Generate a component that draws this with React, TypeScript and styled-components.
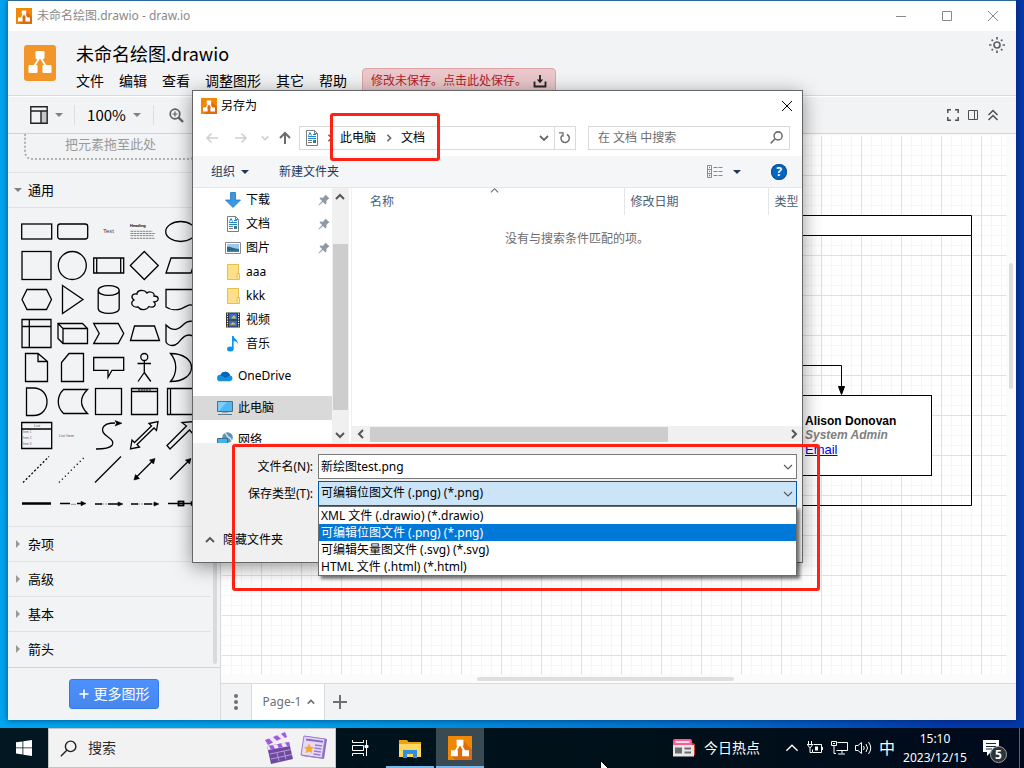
import React from 'react';
import styled, { createGlobalStyle, css } from 'styled-components';

const UI_FONT = '"Noto Sans", "Noto Sans CJK SC", sans-serif';
const NARROW_FONT = '"Noto Sans CJK SC", sans-serif';
const INK = '#000';

const GlobalStyle = createGlobalStyle`
  *, *::before, *::after { box-sizing: border-box; }
  body { margin: 0; font-family: ${UI_FONT}; font-size: 12px; line-height: 16px; color: ${INK}; }
  button, input, select { font: inherit; color: inherit; margin: 0; padding: 0; border: 0; background: none; border-radius: 0; }
  h1, h2, p, ul { margin: 0; padding: 0; font-size: inherit; font-weight: inherit; list-style: none; }
  svg { display: block; flex: none; }
`;

/* ---------- desktop ---------- */

const Desktop = styled.div`
  position: relative;
  display: flex;
  flex-direction: column;
  min-height: 100vh;
  overflow: hidden;
  background: linear-gradient(90deg, #00a4ef 0%, #009fe8 30%, #0068c8 72%, #0439a8 92%, #0439a8 100%);
`;

const AppWindow = styled.div`
  flex: 1;
  display: flex;
  flex-direction: column;
  margin: 0 8px 8px;
  border-top: 1px solid #2b6a9c;
  background: #f1f3f5;
  box-shadow: 0 0 6px rgba(0, 20, 60, 0.6);
`;

const Row = styled.div<{ $gap?: number }>`
  display: flex;
  align-items: center;
  gap: ${(p) => p.$gap ?? 0}px;
`;

const Spacer = styled.div`
  flex: 1;
`;

const IconButton = styled.button<{ $w?: number; $h?: number }>`
  display: flex;
  align-items: center;
  justify-content: center;
  flex: none;
  width: ${(p) => p.$w ?? 20}px;
  height: ${(p) => p.$h ?? 20}px;
`;

/* ---------- main window ---------- */

const TitleBar = styled.div`
  display: flex;
  align-items: center;
  height: 30px;
  padding-left: 8px;
  gap: 5px;
  background: #fff;
  color: #8a8a8a;
`;

const Header = styled.header`
  display: flex;
  height: 65px;
  padding: 0 8px 0 16px;
  border-bottom: 1px solid #d8dadd;
`;

const HeaderLogo = styled.div`
  margin-top: 14px;
`;

const HeaderText = styled.div`
  flex: 1;
  padding: 10px 0 0 20px;
`;

const DocTitle = styled.h1`
  height: 24px;
  font-family: ${NARROW_FONT};
  font-size: 18px;
  line-height: 24px;
`;

const MenuRow = styled.nav`
  display: flex;
  gap: 15px;
  align-items: center;
  height: 28px;
  margin-top: 2px;
`;

const MenuButton = styled.button`
  font-size: 14px;
  line-height: 20px;
`;

const SaveNotice = styled.button`
  display: flex;
  align-items: center;
  gap: 6px;
  height: 26px;
  padding: 0 8px;
  border: 1px solid #dfa3a8;
  border-radius: 4px;
  background: #e9c7ca;
  color: #b5202a;
`;

const Toolbar = styled.div`
  display: flex;
  align-items: center;
  height: 38px;
  padding: 0 13px 0 10px;
  border-top: 1px solid #fff;
  border-bottom: 1px solid #d0d2d4;
`;

const ToolDivider = styled.span`
  width: 1px;
  height: 20px;
  background: #dcdee0;
`;

const ToolButton = styled.button<{ $w: number }>`
  display: flex;
  align-items: center;
  justify-content: center;
  gap: 7px;
  width: ${(p) => p.$w}px;
  height: 28px;
  font-family: ${NARROW_FONT};
  font-size: 15px;
  line-height: 20px;
`;

const Body = styled.div`
  flex: 1;
  display: flex;
`;

/* ---------- shape sidebar ---------- */

const Sidebar = styled.aside`
  display: flex;
  flex-direction: column;
  width: 213px;
  flex: none;
  border-right: 1px solid #d8dadd;
`;

const SidebarScroll = styled.div`
  flex: 1;
  display: flex;
  border-bottom: 1px solid #d0d2d4;
`;

const SidebarPane = styled.div`
  flex: 1;
`;

const SidebarTrack = styled.div`
  display: flex;
  width: 9px;
  padding: 3px 3px 3px 2px;
`;

const SidebarThumb = styled.div`
  flex: 1;
  border-radius: 2px;
  background: #d8dadc;
`;

const DropZone = styled.p`
  height: 26px;
  margin: 0 14px 12px 16px;
  border: 2px dotted #b0b0b0;
  border-top: 0;
  border-radius: 0 0 8px 8px;
  color: #9a9a9a;
  font-size: 13px;
  line-height: 20px;
  text-align: center;
`;

const SectionButton = styled.button`
  display: flex;
  align-items: center;
  gap: 6px;
  width: 100%;
  height: 35px;
  padding-left: 6px;
  border-top: 1px solid #dfe1e3;
  font-size: 13px;
  line-height: 20px;
`;

const ShapeGrid = styled.div`
  display: grid;
  grid-template-columns: repeat(5, 36px);
  grid-auto-rows: 34px;
  padding: 6px 0 6px 10px;
  border-top: 1px solid #dfe1e3;
`;

const SidebarFooter = styled.div`
  display: flex;
  justify-content: center;
  padding: 11px 0;
`;

const MoreShapes = styled.button`
  display: flex;
  align-items: center;
  justify-content: center;
  gap: 5px;
  width: 90px;
  height: 30px;
  border: 1px solid #3079ed;
  border-radius: 3px;
  background: linear-gradient(#4d90fe, #4787ed);
  color: #fff;
  font-size: 14px;
  line-height: 20px;
`;

/* ---------- canvas ---------- */

const Editor = styled.main`
  flex: 1;
  display: flex;
  flex-direction: column;
  min-width: 0;
`;

const CanvasArea = styled.div`
  flex: 1;
  display: grid;
  grid-template-columns: 1fr 10px;
  grid-template-rows: 1fr 9px;
  padding: 2px 0 0 1px;
  background: #fbfbfb;
`;

const Stage = styled.div`
  position: relative;
  overflow: hidden;
  background-color: #fff;
  background-image:
    linear-gradient(90deg, #e0e0e0 1px, transparent 1px),
    linear-gradient(#e0e0e0 1px, transparent 1px),
    linear-gradient(90deg, #f6f6f6 1px, transparent 1px),
    linear-gradient(#f6f6f6 1px, transparent 1px);
  background-size: 40px 40px, 40px 40px, 10px 10px, 10px 10px;
  background-position: 39px 0, 0 39px, 9px 0, 0 9px;
`;

const Diagram = styled.svg`
  position: absolute;
  left: 0;
  top: 0;
`;

const PersonCard = styled.div`
  position: absolute;
  left: 539px;
  top: 259px;
  width: 171px;
  height: 81px;
  padding: 18px 0 0 43px;
  border: 1px solid #000;
  background: #fff;
  font: bold 12px/14px "Liberation Sans", sans-serif;
`;

const Role = styled.p`
  color: #808080;
  font-style: italic;
`;

const MailLink = styled.a`
  color: #0000ee;
  font-size: 13px;
  font-weight: 400;
  line-height: 16px;
  text-decoration: underline;
`;

const VRail = styled.div`
  padding: 127px 3px 0;
`;

const VThumb = styled.div`
  height: 126px;
  border-radius: 2px;
  background: #dedede;
`;

const HRail = styled.div`
  padding: 3px 0 0 255px;
`;

const HThumb = styled.div`
  width: 257px;
  height: 4px;
  border-radius: 2px;
  background: #dedede;
`;

const TabStrip = styled.div`
  display: flex;
  height: 37px;
  border-top: 1px solid #d8dadd;
`;

const PageTab = styled.button`
  display: flex;
  align-items: center;
  justify-content: center;
  gap: 6px;
  width: 74px;
  padding-left: 2px;
  border: solid #d8dadd;
  border-width: 0 1px;
  background: #fff;
  color: #707070;
`;

/* ---------- save dialog ---------- */

const Dialog = styled.section`
  position: absolute;
  left: 192px;
  top: 90px;
  width: 611px;
  border: 1px solid #666;
  background: #fff;
  box-shadow: 0 4px 18px rgba(0, 0, 0, 0.42);
`;

const DialogTitle = styled.div`
  display: flex;
  align-items: center;
  height: 30px;
  padding: 0 5px 1px 8px;
  gap: 4px;
`;

const NavRow = styled.div`
  display: flex;
  align-items: center;
  height: 35px;
  padding: 0 12px 2px 8px;
`;

const AddressBar = styled.div`
  flex: none;
  display: flex;
  align-items: center;
  width: 277px;
  height: 24px;
  margin-right: 12px;
  padding-left: 4px;
  border: 1px solid #d9d9d9;
`;

const Crumb = styled.button`
  flex: none;
`;

const RefreshCell = styled.span`
  display: flex;
  height: 100%;
  border-left: 1px solid #d9d9d9;
`;

const SearchBox = styled.label`
  flex: 1;
  display: flex;
  align-items: center;
  min-width: 0;
  height: 24px;
  padding: 0 6px 0 9px;
  border: 1px solid #d9d9d9;

  input {
    flex: 1;
    min-width: 0;
    outline: 0;
  }

  input::placeholder {
    color: #6d6d6d;
    opacity: 1;
  }
`;

const CommandBar = styled.div`
  display: flex;
  align-items: center;
  height: 32px;
  padding: 0 15px 0 18px;
  border-bottom: 1px solid #e4e6e8;
  background: #f4f6f8;
  color: #1e395b;
`;

const CommandButton = styled.button<{ $gap?: number }>`
  display: flex;
  align-items: center;
  gap: ${(p) => p.$gap ?? 6}px;
  margin-right: 30px;
`;

const Browser = styled.div`
  display: flex;
  height: 255px;
`;

const Tree = styled.ul`
  width: 139px;
  overflow: hidden;
`;

const TreeItem = styled.li<{ $level: number; $selected?: boolean }>`
  display: flex;
  align-items: center;
  gap: 5px;
  height: 24px;
  margin-bottom: ${(p) => (p.$level === 1 ? 8 : 0)}px;
  padding-left: ${(p) => (p.$level === 1 ? 24 : 32)}px;
  background: ${(p) => (p.$selected ? '#d9d9d9' : 'transparent')};
`;

const TreeGap = styled.li`
  height: 8px;
`;

const PinSlot = styled.span`
  margin-left: auto;
  padding-right: 2px;
`;

const TreeScroll = styled.div`
  display: flex;
  flex-direction: column;
  width: 17px;
  background: #f0f0f0;
`;

const TreeThumb = styled.div`
  flex: 1;
  margin: 38px 1px 16px;
  background: #cdcdcd;
`;

const FileList = styled.div`
  flex: 1;
  display: flex;
  flex-direction: column;
  min-width: 0;
  margin-left: 2px;
  border-left: 1px solid #f0f0f0;
`;

const FileTable = styled.table`
  width: 100%;
  table-layout: fixed;
  border-collapse: collapse;
  color: #4c607a;

  th {
    position: relative;
    height: 27px;
    padding: 0 0 0 6px;
    border-right: 1px solid #e5e5e5;
    font-weight: 400;
    text-align: left;
    white-space: nowrap;
  }

  th:first-child {
    width: 272px;
    padding-left: 18px;
  }

  th:nth-child(2) {
    width: 144px;
  }

  th:last-child {
    border-right: 0;
  }
`;

const SortMark = styled.span`
  position: absolute;
  left: 138px;
  top: -2px;
`;

const EmptyNote = styled.p`
  flex: 1;
  padding-top: 16px;
  color: #6d6d6d;
  text-align: center;
`;

const ListScroll = styled.div`
  display: flex;
  align-items: center;
  height: 16px;
  margin-bottom: 1px;
  background: #f0f0f0;
`;

const ListThumb = styled.div`
  width: 298px;
  height: 15px;
  background: #cdcdcd;
`;

const DialogFooter = styled.div`
  padding-top: 11px;
  background: #f0f0f0;
`;

const FieldGrid = styled.div`
  display: grid;
  grid-template-columns: 120px 479px;
  gap: 2px 5px;
`;

const FieldLabel = styled.label`
  align-self: center;
  text-align: right;
`;

const FieldWrap = styled.div`
  position: relative;
`;

const fieldBox = css`
  display: block;
  width: 100%;
  height: 25px;
  padding: 0 24px 1px 2px;
  outline: 0;
`;

const NameInput = styled.input`
  && {
    ${fieldBox}
    border: 1px solid #7a7a7a;
    background: #fff;
  }
`;

const TypeSelect = styled.select`
  && {
    ${fieldBox}
    appearance: none;
    border: 1px solid #0058a8;
    background: #cce4f7;
  }
`;

const FieldArrow = styled.span`
  position: absolute;
  right: 4px;
  top: 8px;
  pointer-events: none;
`;

const OptionList = styled.ul`
  position: absolute;
  left: 0;
  top: 25px;
  z-index: 2;
  width: 100%;
  border: 1px solid #6b6b6b;
  background: #fff;
  box-shadow: 3px 3px 3px rgba(0, 0, 0, 0.5);
`;

const OptionItem = styled.li<{ $active?: boolean }>`
  height: 17px;
  padding-left: 2px;
  line-height: 17px;
  background: ${(p) => (p.$active ? '#0078d7' : '#fff')};
  color: ${(p) => (p.$active ? '#fff' : '#000')};
`;

const HideFolders = styled.button`
  display: flex;
  align-items: center;
  gap: 8px;
  height: 56px;
  padding: 12px 0 0 12px;
`;

const Highlight = styled.div<{ $x: number; $y: number; $w: number; $h: number }>`
  position: absolute;
  left: ${(p) => p.$x}px;
  top: ${(p) => p.$y}px;
  width: ${(p) => p.$w}px;
  height: ${(p) => p.$h}px;
  border: 3px solid #ff2113;
  border-radius: 3px;
  pointer-events: none;
`;

/* ---------- taskbar ---------- */

const Taskbar = styled.footer`
  display: flex;
  align-items: center;
  height: 40px;
  background: linear-gradient(90deg, #011722, #001019 65%, #000a1c);
  color: #fff;
`;

const TaskButton = styled.button<{ $active?: boolean; $open?: boolean }>`
  display: flex;
  align-items: center;
  justify-content: center;
  flex: none;
  width: 48px;
  height: 40px;
  padding-top: 2px;
  margin-right: 2px;
  border-bottom: 2px solid ${(p) => (p.$open ? '#76b9ed' : 'transparent')};
  background: ${(p) => (p.$active ? '#3a4a53' : 'transparent')};
`;

const StartButton = styled(TaskButton)`
  margin-right: 0;
`;

const TaskSearch = styled.label`
  display: flex;
  align-items: center;
  gap: 11px;
  width: 288px;
  height: 40px;
  padding: 0 8px 0 11px;
  border: 1px solid #c4c4c4;
  background: #f2f2f2;
  font-size: 14px;

  input {
    flex: 1;
    min-width: 0;
    outline: 0;
  }

  input::placeholder {
    color: #2b2b2b;
    opacity: 1;
  }
`;

const NewsButton = styled.button`
  display: flex;
  align-items: center;
  gap: 9px;
  margin-right: 21px;
  font-size: 14px;
  line-height: 20px;
`;

const Ime = styled.button`
  width: 24px;
  font-size: 16px;
  line-height: 20px;
`;

const Clock = styled.button`
  width: 68px;
  margin-right: 14px;
  margin-left: 2px;
  line-height: 19px;
  text-align: center;
`;

const Notifications = styled.button`
  position: relative;
  display: flex;
  width: 36px;
`;

const Badge = styled.span`
  position: absolute;
  left: 7px;
  top: 6px;
  width: 17px;
  height: 17px;
  border: 1px solid #9a9fa5;
  border-radius: 50%;
  background: #2c333b;
  font-weight: 700;
  line-height: 15px;
  text-align: center;
`;

const DesktopEdge = styled.span`
  width: 5px;
  height: 40px;
  border-left: 1px solid #5a626c;
`;

const Pointer = styled.svg`
  position: absolute;
  left: 600px;
  bottom: -10px;
`;

/* ---------- icons ---------- */

const AppIcon = ({ size = 16 }: { size?: number }) => (
  <svg width={size} height={size} viewBox="0 0 16 16">
    <path d="M0 0h16v16H0z" fill="#f08705" />
    <path d="M10 3l6 6v7H5l-3-3 6-8z" fill="#df6c0c" />
    <path d="M8 5L4.500 11M8 5l3.500 6" stroke="#fff" strokeWidth="1.300" />
    <path d="M5.700 2.500h4.600v4H5.700zM2 9.500h4.600v4H2zM9.400 9.500H14v4H9.400z" fill="#fff" />
  </svg>
);

const BigLogo = () => (
  <svg width="32" height="36" viewBox="0 0 32 36">
    <rect width="32" height="36" rx="3" fill="#f2962a" />
    <path d="M16 12L9.500 22M16 12l6.500 10" stroke="#fff" strokeWidth="1.800" />
    <rect x="11.500" y="6" width="9" height="8" rx="1" fill="#fff" />
    <rect x="4.500" y="20" width="9" height="8" rx="1" fill="#fff" />
    <rect x="18.500" y="20" width="9" height="8" rx="1" fill="#fff" />
  </svg>
);

type Dir = 'up' | 'down' | 'left' | 'right';

const chevronPaths: Record<Dir, string> = {
  up: 'M1 7l4-4 4 4',
  down: 'M1 3l4 4 4-4',
  left: 'M7 1L3 5l4 4',
  right: 'M3 1l4 4-4 4',
};

const Chevron = ({ dir, color = '#555', size = 10, weight = 1.5 }: { dir: Dir; color?: string; size?: number; weight?: number }) => (
  <svg width={size} height={size} viewBox="0 0 10 10" fill="none" stroke={color} strokeWidth={weight}>
    <path d={chevronPaths[dir]} />
  </svg>
);

const Caret = ({ dir = 'down', color = '#808080', size = 8 }: { dir?: Dir; color?: string; size?: number }) => (
  <svg width={size} height={size} viewBox="0 0 8 8" fill={color}>
    <path d={dir === 'down' ? 'M0 2h8L4 6z' : 'M2 0v8l4-4z'} />
  </svg>
);

const CrossIcon = ({ color, size = 12 }: { color: string; size?: number }) => (
  <svg width={size} height={size} viewBox="0 0 12 12" stroke={color}>
    <path d="M1 1l10 10M11 1L1 11" />
  </svg>
);

const ArrowIcon = ({ dir, color }: { dir: 'left' | 'right' | 'up'; color: string }) => {
  const paths = {
    left: 'M13 7H2M6.500 2.500L2 7l4.500 4.500',
    right: 'M1 7h11M7.500 2.500L12 7l-4.500 4.500',
    up: 'M7 13V2.500M2 7l5-5 5 5',
  };
  return (
    <svg width="14" height="14" viewBox="0 0 14 14" fill="none" stroke={color} strokeWidth={dir === 'up' ? 2 : 1.6}>
      <path d={paths[dir]} />
    </svg>
  );
};

const SunIcon = () => (
  <svg width="16" height="16" viewBox="0 0 16 16" fill="none" stroke="#5f6368" strokeWidth="1.700">
    <circle cx="8" cy="8" r="3" />
    <path d="M8 0v2.500M8 13.500V16M0 8h2.500M13.500 8H16M2.600 2.600l1.400 1.400M12 12l1.400 1.400M13.400 2.600L12 4M4 12l-1.400 1.400" />
  </svg>
);

const SaveIcon = () => (
  <svg width="14" height="14" viewBox="0 0 14 14" fill="none" stroke="#222" strokeWidth="1.800">
    <path d="M1.500 7.500v5h11v-5M7 1v7" />
    <path d="M3.800 5.500L7 9.200l3.200-3.700z" fill="#222" stroke="none" />
  </svg>
);

const LayoutIcon = () => (
  <svg width="18" height="18" viewBox="0 0 18 18">
    <path d="M11 5h6v12h-6z" fill="#c4c6c8" />
    <path d="M.8.8h16.400v16.400H.8zM.8 5h16.400M11 5v12" fill="none" stroke="#222" strokeWidth="1.400" />
  </svg>
);

const ZoomIcon = () => (
  <svg width="15" height="15" viewBox="0 0 15 15" fill="none" stroke="#5f6368">
    <circle cx="6" cy="6" r="4.800" strokeWidth="1.700" />
    <path d="M9.500 9.500L14 14" strokeWidth="2.400" />
    <path d="M6 3.500v5M3.500 6h5" strokeWidth="1.200" />
  </svg>
);

const FullscreenIcon = () => (
  <svg width="12" height="12" viewBox="0 0 12 12" fill="none" stroke="#4d5156" strokeWidth="1.500">
    <path d="M.8 4V.8H4M8 .8h3.200V4M11.200 8v3.200H8M4 11.200H.8V8" />
  </svg>
);

const FormatIcon = () => (
  <svg width="10" height="10" viewBox="0 0 10 10" fill="none" stroke="#4d5156">
    <path d="M.5.5h9v9h-9zM6.500.5v9" />
  </svg>
);

const CollapseIcon = () => (
  <svg width="12" height="12" viewBox="0 0 12 12" fill="none" stroke="#4d5156" strokeWidth="1.500">
    <path d="M1.500 6L6 1.500 10.500 6M1.500 11L6 6.500 10.500 11" />
  </svg>
);

const DocIcon = () => (
  <svg width="16" height="16" viewBox="0 0 16 16" fill="none">
    <path d="M2.500.5h8l3 3v12h-11z" fill="#fff" stroke="#7d7d7d" />
    <path d="M10.500.5v3h3" stroke="#7d7d7d" />
    <path d="M4 8.500h8M4 6.500h8M9 4.500h3" stroke="#1c86d1" />
    <path d="M4.500 5.500L6 2.500l1.500 3" stroke="#1c86d1" />
    <path d="M4 10.500h4M4 12.500h4" stroke="#777" />
    <path d="M9 10h3v3H9z" fill="#2f7f8c" />
  </svg>
);

const DownloadIcon = () => (
  <svg width="16" height="16" viewBox="0 0 16 16">
    <path d="M5.500.5h5V8h5L8 15.500.5 8h5z" fill="#3d97e0" stroke="#1d78c4" strokeWidth=".8" />
  </svg>
);

const PictureIcon = () => (
  <svg width="16" height="16" viewBox="0 0 16 16">
    <path d="M.5 2.500h15v11H.5z" fill="#fff" stroke="#8a8a8a" />
    <path d="M2 4h12v8H2z" fill="#9cc9f2" />
    <path d="M2 7c3-1 5 1.500 12 2v3H2z" fill="#2f6a6f" />
    <path d="M2 10.500h12V12H2z" fill="#3a7fb8" />
  </svg>
);

const FolderIcon = () => (
  <svg width="16" height="16" viewBox="0 0 16 16">
    <path d="M2.500.5h11v15h-11z" fill="#ffe08a" stroke="#e8bf4a" />
    <path d="M12 9.500h2.500v6H12z" fill="#ffe9a8" stroke="#e8bf4a" />
  </svg>
);

const VideoIcon = () => (
  <svg width="16" height="16" viewBox="0 0 16 16">
    <path d="M1 .5h14v15H1z" fill="#2e2e2e" />
    <path d="M4 1.500h8v6H4zM4 8.500h8v6H4z" fill="#2f6fd0" />
    <path d="M6 6.500l3-3.500 2.500 3.500zM5 13l3-3 3 2.500z" fill="#f0b428" />
    <path d="M2.500 1.500v13M13.500 1.500v13" stroke="#fff" strokeWidth="1.200" strokeDasharray="1.200 1.200" />
  </svg>
);

const MusicIcon = () => (
  <svg width="16" height="16" viewBox="0 0 16 16" fill="#0f93f0">
    <ellipse cx="5.300" cy="13" rx="3.300" ry="2.500" />
    <path d="M7 0h1.600c.3 3 4.900 3.500 4.200 8.500-.2-2.300-2-3.300-4.200-3.500V13H7z" />
  </svg>
);

const CloudIcon = () => (
  <svg width="16" height="16" viewBox="0 0 16 16">
    <path d="M3.200 13.300a3.300 3.300 0 01.3-6.600A5.200 5.200 0 0113 7.200a3.100 3.100 0 010 6.100z" fill="#1490df" />
    <path d="M3.500 6.700A5.200 5.200 0 0113 7.200L8.500 10z" fill="#0364b8" />
  </svg>
);

const PcIcon = () => (
  <svg width="16" height="16" viewBox="0 0 16 16">
    <path d="M.5 1.500h15v10H.5z" fill="#52b6f2" stroke="#4a6f86" />
    <path d="M1 2h9l-8 9H1z" fill="#7fcdfa" />
    <path d="M1 14.500h14" stroke="#5c7a8c" />
    <path d="M5 12.500h6" stroke="#9aa9b2" />
  </svg>
);

const NetworkIcon = () => (
  <svg width="16" height="16" viewBox="0 0 16 16">
    <circle cx="10.500" cy="5.500" r="5.300" fill="#5a93b4" />
    <path d="M8 1.500c3 1 1 3 4 4s1 3 3 3" fill="none" stroke="#cfe3ee" strokeWidth="1.500" />
    <path d="M.5 6.500h10v6H.5z" fill="#41b2f4" stroke="#3c6f8f" />
  </svg>
);

const PinIcon = () => (
  <svg width="12" height="12" viewBox="0 0 12 12" fill="#8d99a6">
    <path d="M7.500.5l4 4-1.200.6-2 2 .2 2.400-1 1-2.600-2.600L1 11.500l-.5-.5 3.600-3.900L1.500 4.500l1-1 2.400.2 2-2z" />
  </svg>
);

const RefreshIcon = () => (
  <svg width="12" height="12" viewBox="0 0 12 12" fill="none" stroke="#6b6b6b" strokeWidth="1.500">
    <path d="M8 2.500A4.200 4.200 0 113.500 3" />
    <path d="M3 .8h4v4" strokeWidth="1.300" transform="translate(-3 0)" />
  </svg>
);

const SearchGlyph = ({ size = 12, color = '#6b6b6b', weight = 1.4 }: { size?: number; color?: string; weight?: number }) => (
  <svg width={size} height={size} viewBox="0 0 12 12" fill="none" stroke={color} strokeWidth={weight}>
    <circle cx="7.500" cy="4.500" r="3.700" />
    <path d="M4.800 7.200L.6 11.400" />
  </svg>
);

const ViewIcon = () => (
  <svg width="17" height="13" viewBox="0 0 17 13" fill="none">
    <path d="M.5.500h4v12h-4zM.5 4.500h4M.5 8.500h4" stroke="#8a8a8a" />
    <path d="M2 2.500h1" stroke="#2f9e44" />
    <path d="M2 6.500h1" stroke="#2f7fe0" />
    <path d="M2 10.500h1" stroke="#e03131" strokeWidth="1.500" />
    <path d="M6.500 2.500h10M6.500 6.500h10M6.500 10.500h10" stroke="#8a8a8a" strokeDasharray="4 1" />
  </svg>
);

const HelpDisc = styled.span`
  width: 16px;
  height: 16px;
  border-radius: 50%;
  background: #0067c5;
  box-shadow: 0 0 0 1px #1a4f86 inset;
  color: #fff;
  font-weight: 700;
  line-height: 16px;
  text-align: center;
`;

const WindowsLogo = () => (
  <svg width="16" height="16" viewBox="0 0 16 16" fill="#fff">
    <path d="M0 2.300L6.500 1.400v6.100H0zM7.300 1.300L16 0v7.500H7.300zM0 8.300h6.500v6.200L0 13.600zM7.300 8.300H16V16l-8.700-1.300z" />
  </svg>
);

const ClapperArt = () => (
  <svg width="28" height="32" viewBox="0 0 28 32">
    <path d="M0 8l20-8 2 5L3 13z" fill="#efe6fa" />
    <path d="M0 8l4-1.600 4 4L3 13zM8 5l4-1.800 4 3.600-4.200 2zM16 1.800L20 0l2 5-2 1z" fill="#a05ae0" />
    <path d="M2 14l22-4 4 17-22 5z" fill="#6f4aa0" />
    <path d="M2 14l22-4 1 4-22 4z" fill="#efe6fa" />
    <path d="M4 13.700l4-.7 2 3.800-4.200.8zM12 12.200l4-.7 2 3.700-4.200.8zM20 10.800l4-.8 1 4-2.500.5z" fill="#a05ae0" />
    <path d="M5 22l21-4.500M6 27l21-4.500M12 21l2 8M19 19l2 8" stroke="#b79bdc" />
  </svg>
);

const NewsArt = () => (
  <svg width="27" height="26" viewBox="0 0 27 26">
    <path d="M5 1l22 3-3 20-22-3z" fill="#8b6cc0" />
    <path d="M4 1l21 3-3 19-21-3z" fill="#e6daf6" stroke="#9a7bd0" />
    <path d="M6 4.500l17 2.300" stroke="#8b6cc0" strokeWidth="2" />
    <path d="M15 10l7 1M14.500 13l7 1M14 16l7 1M13.500 19l7 1" stroke="#9a7bd0" strokeWidth="1.300" />
    <path d="M9 8.500l1.500 3.200 3.500.5-2.500 2.400.6 3.500L9 16.500l-3.200 1.600.6-3.500L4 12.200l3.500-.5z" fill="#f9a91e" />
  </svg>
);

const TaskViewIcon = () => (
  <svg width="17" height="16" viewBox="0 0 17 16" fill="none" stroke="#fff">
    <path d="M.5 0v2.500h11V0M.5 5.500h11v5H.5zM.5 16v-2.500h11V16M14.500 0v16" />
    <path d="M13 5.500h3v2h-3z" fill="#fff" />
  </svg>
);

const ExplorerIcon = () => (
  <svg width="22" height="20" viewBox="0 0 22 20">
    <path d="M0 2h8l1.500 2H22v15H0z" fill="#e8a317" />
    <path d="M0 6h22v13H0z" fill="#ffd75e" />
    <path d="M4 12h14v8h-4v-4H8v4H4z" fill="#2f8fe0" />
  </svg>
);

const HotNewsIcon = () => (
  <svg width="22" height="18" viewBox="0 0 22 18">
    <path d="M17 3l5 2v11h-4z" fill="#c8402c" />
    <path d="M0 2a2 2 0 012-2h15a2 2 0 012 2v15H0z" fill="#ff5c93" />
    <path d="M2.500 3h14" stroke="#fff" strokeWidth="1.600" />
    <path d="M0 6h21v11.500H0z" fill="#e8e8e8" />
    <path d="M2 8.500h7v6H2z" fill="#6d6d6d" />
    <path d="M11.500 9.500h6.500M11.500 13.500h6.500" stroke="#6d6d6d" strokeWidth="2" />
  </svg>
);

const BatteryIcon = () => (
  <svg width="16" height="14" viewBox="0 0 16 14" fill="none" stroke="#fff">
    <path d="M6.500 3.500h8v8h-9v-3M15.500 6v3M1.500 0v3M4.500 0v3M0 3.500h6M1 4c0 3 4 3 4 0M3 6v5.500h2" />
    <path d="M8 5.500h3v4H8z" fill="#fff" stroke="none" />
  </svg>
);

const MonitorIcon = () => (
  <svg width="17" height="14" viewBox="0 0 17 14" fill="none" stroke="#fff">
    <path d="M6.500 1.500h10v8h-11M11 9.500v3M7 13h7M.5.5h5v4h-5zM2 2.500h2M3 4.500v8h2" />
  </svg>
);

const SpeakerIcon = () => (
  <svg width="17" height="14" viewBox="0 0 17 14" fill="none" stroke="#fff">
    <path d="M.5 4.500h2.500l3.500-3v11L3 9.500H.5z" />
    <path d="M8.500 5q1.500 2 0 4M11 3q3 4 0 8M13.500 1q4.500 6 0 12" />
  </svg>
);

const MessageIcon = () => (
  <svg width="17" height="17" viewBox="0 0 17 17">
    <path d="M0 0h16v12H8l-4 4v-4H0z" fill="#fff" />
    <path d="M3 3.500h10M3 6.500h10M3 9h6" stroke="#1b2a3a" />
  </svg>
);

/* ---------- shape palette ---------- */

const ShapeSvg = styled.svg`
  fill: none;
  stroke: #000;
  stroke-width: 1.3px;
`;

const TinyText = styled.text<{ $size?: number; $ink?: string; $bold?: boolean }>`
  fill: ${(p) => p.$ink ?? '#5a6070'};
  stroke: none;
  font-family: 'Liberation Sans', sans-serif;
  font-size: ${(p) => p.$size ?? 4}px;
  font-weight: ${(p) => (p.$bold ? 700 : 400)};
`;

const shapes: React.ReactNode[] = [
  <rect x="3.700" y="10" width="30" height="15" />,
  <rect x="3.700" y="10" width="30" height="15" rx="2.500" />,
  <TinyText x="13" y="19" $size={6} $ink="#333a5a">Text</TinyText>,
  <>
    <TinyText x="4" y="13" $size={4} $ink="#000" $bold>Heading</TinyText>
    <path d="M4.500 17.300h22M4.500 19.500h25M4.500 21.600h23M4.500 24.300h24" strokeWidth=".7" strokeDasharray="2.500 .6" stroke="#555" />
  </>,
  <ellipse cx="18.700" cy="17.500" rx="15" ry="10" />,

  <rect x="4" y="3.500" width="29" height="28" />,
  <circle cx="18.300" cy="17.500" r="14" />,
  <path d="M3.700 10h30v15h-30zM6.700 10v15M30.700 10v15" />,
  <path d="M18.300 3.500l14 14-14 14-14-14z" />,
  <path d="M9 10h25l-5 15H4z" />,

  <path d="M9 7.500h19.500l5 10-5 10H9l-5-10z" />,
  <path d="M8.500 3.500l20.500 14-20.500 14z" />,
  <path d="M8.200 8.500v18c0 6.500 21 6.500 21 0v-18c0-6.500-21-6.500-21 0c0 6.500 21 6.500 21 0" />,
  <path d="M11 12c-6-1-6 4-3 6-5 3-1 8 4 7 3 4 9 3 11-.5 5 2 8-2 5-4.500 6-1 5-6 0-6 1-4-5-5-7-3-3-4-10-3-10 1z" />,
  <path d="M4 7.500h30V25c-7-5-9 0-15 1.800-6 2-12 .4-15-1.800z" />,

  <path d="M4 3.500h29v28H4zM11.300 3.500v28M4 10.500h29" />,
  <path d="M4 7.500h24.500l5 5v15H9l-5-5zM9 12.500h24.500M4 7.500l5 5v15" />,
  <path d="M3.700 7.500h24.500l5.500 10-5.500 10H3.700l5.500-10z" />,
  <path d="M8.500 10h20l5 14.500h-29z" />,
  <path d="M4 9c9 9 15 2 18-1s9-4 12-1v15c-9-8-15 2-18 5s-9 4-12-1z" />,

  <path d="M7.500 3.500H20l9.500 8v20h-22zM20 3.500v8h9.500" />,
  <path d="M15 3.500h14.500v28h-22v-19z" />,
  <path d="M3.700 7.500h30v12.800H22l-4 7v-7H3.700z" />,
  <>
    <circle cx="18.300" cy="7" r="3.500" />
    <path d="M18.300 10.500v12M11.500 13.500h13.500M18.300 22.500L12 31.500M18.300 22.500l6.500 9" />
  </>,
  <path d="M8.500 3.500c28 0 28 28 0 28 7-8 7-20 0-28z" />,

  <path d="M8.500 4h7c18 0 18 27.500 0 27.500h-7z" />,
  <path d="M9.500 5.500h24c-8 8-8 16 0 24h-24c-7-7-7-17 0-24z" />,
  <rect x="5.500" y="4.500" width="26" height="26" />,
  <>
    <path d="M5.500 4.500h26v26h-26zM5.500 7.500h26" />
    <path d="M12 6h13" strokeWidth="1" strokeDasharray="2 .7" />
  </>,
  <path d="M5.500 4.500h28v26h-28zM8.500 4.500v26" />,

  <>
    <path d="M3.700 4.500h30v26h-30zM3.700 11h30" />
    <TinyText x="16" y="9">List</TinyText>
    <TinyText x="5" y="15" $size={3}>Item 1</TinyText>
    <TinyText x="5" y="21" $size={3}>Item 2</TinyText>
    <TinyText x="5" y="27" $size={3}>Item 3</TinyText>
  </>,
  <TinyText x="5" y="19">List Item</TinyText>,
  <>
    <path d="M6 31c18 0 21-6 12-12s-7-14 7-14" />
    <path d="M25 2.500l7 2.700-7 2.800 1.500-2.800z" fill="#000" strokeWidth=".5" />
  </>,
  <path d="M4.500 31l1.500-9 2.500 2.500L25.500 8 23 5.500l9-2-1.500 9L28 10 11 26.500l2.500 2.500z" />,
  <path d="M5 27.500L24.500 8 20 4.500l12.500-1L31 16l-3.500-4L8 31z" />,

  <path d="M5 30.500l26-26" strokeDasharray="2 2" />,
  <path d="M5 30.500l26-26" strokeDasharray="1.200 3" />,
  <path d="M5 30.500l26-26" />,
  <>
    <path d="M9 26.500l19-19" />
    <path d="M8 28l1.500-5.500 4 4zM29 6.500l-5.500 1.500 4 4z" fill="#000" strokeWidth=".6" />
  </>,
  <>
    <path d="M8 27.500l19-19" />
    <path d="M29 6.500l-5.500 1.500 4 4z" fill="#000" strokeWidth=".6" />
  </>,

  <path d="M4 17.500h29" strokeWidth="2.500" />,
  <>
    <path d="M6 17.500h10M23 17.500h5" />
    <path d="M17 18.300h5" stroke="#777" strokeWidth=".8" />
    <path d="M27 15.300l5 2.200-5 2.200z" fill="#000" strokeWidth=".5" />
  </>,
  <>
    <path d="M5 18h7M18 18h11" />
    <path d="M12 18h6" stroke="#777" strokeWidth=".8" strokeDasharray="2 1" />
    <path d="M28 16l5 2-5 2z" fill="#000" strokeWidth=".5" />
  </>,
  <>
    <path d="M5 18h7M18 18h8" />
    <path d="M12 18h6M26 18h3" stroke="#777" strokeWidth=".8" strokeDasharray="2 1" />
    <path d="M28 16l5 2-5 2z" fill="#000" strokeWidth=".5" />
  </>,
  <>
    <path d="M6 17.500h24" strokeWidth="1.500" />
    <rect x="16.500" y="15.500" width="5" height="4" strokeWidth="1.800" />
    <path d="M29 15.300l5 2.200-5 2.200z" fill="#000" strokeWidth=".5" />
  </>,
];

/* ---------- content ---------- */

const menus = ['文件', '编辑', '查看', '调整图形', '其它', '帮助'];
const closedSections = ['杂项', '高级', '基本', '箭头'];

const quickItems = [
  { name: '下载', icon: <DownloadIcon />, pinned: true },
  { name: '文档', icon: <DocIcon />, pinned: true },
  { name: '图片', icon: <PictureIcon />, pinned: true },
  { name: 'aaa', icon: <FolderIcon /> },
  { name: 'kkk', icon: <FolderIcon /> },
  { name: '视频', icon: <VideoIcon /> },
  { name: '音乐', icon: <MusicIcon /> },
];

const roots = [
  { name: 'OneDrive', icon: <CloudIcon /> },
  { name: '此电脑', icon: <PcIcon />, selected: true },
  { name: '网络', icon: <NetworkIcon /> },
];

const fileTypes = [
  'XML 文件 (.drawio) (*.drawio)',
  '可编辑位图文件 (.png) (*.png)',
  '可编辑矢量图文件 (.svg) (*.svg)',
  'HTML 文件 (.html) (*.html)',
];

const ShapeSidebar = () => (
  <Sidebar>
    <SidebarScroll>
      <SidebarPane>
        <DropZone>把元素拖至此处</DropZone>
        <SectionButton>
          <Caret />
          通用
        </SectionButton>
        <ShapeGrid>
          {shapes.map((shape, i) => (
            <ShapeSvg key={i} width="36" height="34" viewBox="0 0 36 34">
              {shape}
            </ShapeSvg>
          ))}
        </ShapeGrid>
        {closedSections.map((name) => (
          <SectionButton key={name}>
            <Caret dir="right" color="#999" />
            {name}
          </SectionButton>
        ))}
      </SidebarPane>
      <SidebarTrack>
        <SidebarThumb />
      </SidebarTrack>
    </SidebarScroll>
    <SidebarFooter>
      <MoreShapes>
        <svg width="10" height="10" viewBox="0 0 10 10" stroke="#fff" strokeWidth="1.600">
          <path d="M5 .5v9M.5 5h9" />
        </svg>
        更多图形
      </MoreShapes>
    </SidebarFooter>
  </Sidebar>
);

const Canvas = () => (
  <Editor>
    <CanvasArea>
      <Stage>
        <Diagram width="760" height="380" viewBox="0 0 760 380" fill="none" stroke="#000">
          <path d="M19.500 79.500h730v20h-730z" fill="#fff" />
          <path d="M19.500 99.500v270h730v-270M320 229.500h299.500V254" />
          <path d="M616.500 250.500h6l-3 8z" fill="#000" />
        </Diagram>
        <PersonCard>
          <p>Alison Donovan</p>
          <Role>System Admin</Role>
          <MailLink href="#email">Email</MailLink>
        </PersonCard>
      </Stage>
      <VRail>
        <VThumb />
      </VRail>
      <HRail>
        <HThumb />
      </HRail>
    </CanvasArea>
    <TabStrip>
      <IconButton $w={30} $h={36} aria-label="页面">
        <svg width="4" height="16" viewBox="0 0 4 16" fill="#707070">
          <circle cx="2" cy="2" r="2" />
          <circle cx="2" cy="8" r="2" />
          <circle cx="2" cy="14" r="2" />
        </svg>
      </IconButton>
      <PageTab>
        Page-1
        <Chevron dir="up" size={8} color="#707070" weight={2} />
      </PageTab>
      <IconButton $w={30} $h={36} aria-label="插入页面">
        <svg width="14" height="14" viewBox="0 0 14 14" stroke="#707070" strokeWidth="2">
          <path d="M7 0v14M0 7h14" />
        </svg>
      </IconButton>
    </TabStrip>
  </Editor>
);

const SaveDialog = () => (
  <Dialog role="dialog" aria-labelledby="save-title">
    <DialogTitle>
      <AppIcon />
      <h2 id="save-title">另存为</h2>
      <Spacer />
      <IconButton aria-label="关闭">
        <CrossIcon color="#000" />
      </IconButton>
    </DialogTitle>
    <NavRow>
      <IconButton $w={22} aria-label="后退">
        <ArrowIcon dir="left" color="#d0d0d0" />
      </IconButton>
      <IconButton $w={36} aria-label="前进">
        <ArrowIcon dir="right" color="#d0d0d0" />
      </IconButton>
      <IconButton $w={12} aria-label="最近位置">
        <Chevron dir="down" size={8} color="#d0d0d0" weight={2} />
      </IconButton>
      <IconButton $w={28} aria-label="向上">
        <ArrowIcon dir="up" color="#6b6b6b" />
      </IconButton>
      <AddressBar>
        <DocIcon />
        <IconButton $w={20} aria-label="位置">
          <Chevron dir="right" size={8} color="#666" weight={2} />
        </IconButton>
        <Crumb>此电脑</Crumb>
        <IconButton $w={25} aria-label="展开">
          <Chevron dir="right" size={8} color="#666" weight={2} />
        </IconButton>
        <Crumb>文档</Crumb>
        <Spacer />
        <IconButton aria-label="以前的位置">
          <Chevron dir="down" color="#666" weight={1.8} />
        </IconButton>
        <RefreshCell>
          <IconButton $h={22} aria-label="刷新">
            <RefreshIcon />
          </IconButton>
        </RefreshCell>
      </AddressBar>
      <SearchBox>
        <input type="text" placeholder="在 文档 中搜索" aria-label="搜索" />
        <SearchGlyph size={13} />
      </SearchBox>
    </NavRow>
    <CommandBar>
      <CommandButton>
        组织
        <Caret color="#1e395b" />
      </CommandButton>
      <CommandButton>新建文件夹</CommandButton>
      <Spacer />
      <CommandButton $gap={9} aria-label="更改视图">
        <ViewIcon />
        <Caret color="#1e395b" />
      </CommandButton>
      <IconButton $w={16} aria-label="帮助">
        <HelpDisc>?</HelpDisc>
      </IconButton>
    </CommandBar>
    <Browser>
      <Tree>
        {quickItems.map((item) => (
          <TreeItem key={item.name} $level={2}>
            {item.icon}
            {item.name}
            {item.pinned && (
              <PinSlot>
                <PinIcon />
              </PinSlot>
            )}
          </TreeItem>
        ))}
        <TreeGap />
        {roots.map((item) => (
          <TreeItem key={item.name} $level={1} $selected={item.selected}>
            {item.icon}
            {item.name}
          </TreeItem>
        ))}
      </Tree>
      <TreeScroll>
        <IconButton $w={15} $h={18} aria-label="向上滚动">
          <Chevron dir="up" weight={2} />
        </IconButton>
        <TreeThumb />
        <IconButton $w={15} $h={17} aria-label="向下滚动">
          <Chevron dir="down" weight={2} />
        </IconButton>
      </TreeScroll>
      <FileList>
        <FileTable>
          <thead>
            <tr>
              <th>
                名称
                <SortMark>
                  <Chevron dir="up" size={9} color="#666" weight={1.2} />
                </SortMark>
              </th>
              <th>修改日期</th>
              <th>类型</th>
            </tr>
          </thead>
        </FileTable>
        <EmptyNote>没有与搜索条件匹配的项。</EmptyNote>
        <ListScroll>
          <IconButton $w={18} $h={16} aria-label="向左滚动">
            <Chevron dir="left" weight={2} />
          </IconButton>
          <ListThumb />
          <Spacer />
          <IconButton $w={17} $h={16} aria-label="向右滚动">
            <Chevron dir="right" weight={2} />
          </IconButton>
        </ListScroll>
      </FileList>
    </Browser>
    <DialogFooter>
      <FieldGrid>
        <FieldLabel htmlFor="file-name">文件名(N):</FieldLabel>
        <FieldWrap>
          <NameInput id="file-name" type="text" defaultValue="新绘图test.png" />
          <FieldArrow>
            <Chevron dir="down" weight={1.1} />
          </FieldArrow>
        </FieldWrap>
        <FieldLabel htmlFor="file-type">保存类型(T):</FieldLabel>
        <FieldWrap>
          <TypeSelect id="file-type" defaultValue={fileTypes[1]}>
            {fileTypes.map((type) => (
              <option key={type}>{type}</option>
            ))}
          </TypeSelect>
          <FieldArrow>
            <Chevron dir="down" weight={1.1} />
          </FieldArrow>
          <OptionList role="listbox" aria-label="保存类型">
            {fileTypes.map((type, i) => (
              <OptionItem key={type} role="option" aria-selected={i === 1} $active={i === 1}>
                {type}
              </OptionItem>
            ))}
          </OptionList>
        </FieldWrap>
      </FieldGrid>
      <HideFolders>
        <Chevron dir="up" weight={1.8} />
        隐藏文件夹
      </HideFolders>
    </DialogFooter>
  </Dialog>
);

const WindowsTaskbar = () => (
  <Taskbar>
    <StartButton aria-label="开始">
      <WindowsLogo />
    </StartButton>
    <TaskSearch>
      <SearchGlyph size={17} color="#222" weight={1} />
      <input type="text" placeholder="搜索" aria-label="搜索" />
      <Row $gap={7}>
        <ClapperArt />
        <NewsArt />
      </Row>
    </TaskSearch>
    <TaskButton aria-label="任务视图">
      <TaskViewIcon />
    </TaskButton>
    <TaskButton $open aria-label="文件资源管理器">
      <ExplorerIcon />
    </TaskButton>
    <TaskButton $open $active aria-label="draw.io">
      <AppIcon size={24} />
    </TaskButton>
    <Spacer />
    <NewsButton>
      <HotNewsIcon />
      今日热点
    </NewsButton>
    <IconButton $w={22} aria-label="显示隐藏的图标">
      <Chevron dir="up" size={14} color="#fff" weight={1} />
    </IconButton>
    <IconButton $w={24} aria-label="电池">
      <BatteryIcon />
    </IconButton>
    <IconButton $w={24} aria-label="网络">
      <MonitorIcon />
    </IconButton>
    <IconButton $w={24} aria-label="音量">
      <SpeakerIcon />
    </IconButton>
    <Ime>中</Ime>
    <Clock>
      15:10
      <br />
      2023/12/15
    </Clock>
    <Notifications aria-label="通知">
      <MessageIcon />
      <Badge>5</Badge>
    </Notifications>
    <DesktopEdge />
  </Taskbar>
);

export default function App() {
  return (
    <Desktop>
      <GlobalStyle />
      <AppWindow>
        <TitleBar>
          <AppIcon />
          未命名绘图.drawio - draw.io
          <Spacer />
          <IconButton $w={46} aria-label="最小化">
            <svg width="10" height="10" viewBox="0 0 10 10" stroke="#8a8a8a">
              <path d="M0 5.500h10" />
            </svg>
          </IconButton>
          <IconButton $w={36} aria-label="最大化">
            <svg width="10" height="10" viewBox="0 0 10 10" fill="none" stroke="#8a8a8a">
              <path d="M.5.500h9v9h-9z" />
            </svg>
          </IconButton>
          <IconButton $w={46} aria-label="关闭窗口">
            <CrossIcon color="#8a8a8a" />
          </IconButton>
        </TitleBar>
        <Header>
          <HeaderLogo>
            <BigLogo />
          </HeaderLogo>
          <HeaderText>
            <DocTitle>未命名绘图.drawio</DocTitle>
            <MenuRow>
              {menus.map((name) => (
                <MenuButton key={name}>{name}</MenuButton>
              ))}
              <SaveNotice>
                修改未保存。点击此处保存。
                <SaveIcon />
              </SaveNotice>
            </MenuRow>
          </HeaderText>
          <IconButton $w={22} $h={28} aria-label="外观">
            <SunIcon />
          </IconButton>
        </Header>
        <Toolbar>
          <ToolButton $w={56} aria-label="视图">
            <LayoutIcon />
            <Caret />
          </ToolButton>
          <ToolDivider />
          <ToolButton $w={78}>
            100%
            <Caret />
          </ToolButton>
          <ToolDivider />
          <ToolButton $w={44} aria-label="放大">
            <ZoomIcon />
          </ToolButton>
          <Spacer />
          <IconButton aria-label="全屏">
            <FullscreenIcon />
          </IconButton>
          <IconButton aria-label="格式">
            <FormatIcon />
          </IconButton>
          <IconButton aria-label="折叠">
            <CollapseIcon />
          </IconButton>
        </Toolbar>
        <Body>
          <ShapeSidebar />
          <Canvas />
        </Body>
      </AppWindow>
      <WindowsTaskbar />
      <SaveDialog />
      <Highlight $x={330} $y={113} $w={110} $h={48} />
      <Highlight $x={232} $y={444} $w={588} $h={147} />
      <Pointer width="12" height="18" viewBox="0 0 12 18">
        <path d="M.5.500v15l3.500-3.500 2.500 5 2-1-2.300-5H11z" fill="#fff" stroke="#000" />
      </Pointer>
    </Desktop>
  );
}
